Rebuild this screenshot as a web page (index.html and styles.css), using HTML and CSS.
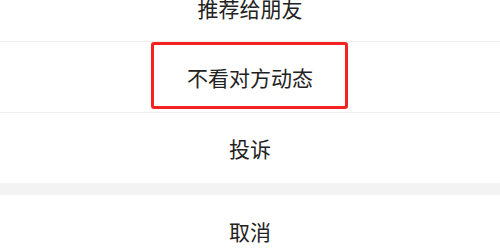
FILE: index.html
```html
<!DOCTYPE html>
<html lang="zh-CN">
<head>
<meta charset="utf-8">
<link rel="stylesheet" href="styles.css">
</head>
<body>
<div class="sheet">
  <div class="group">
    <div class="item first">推荐给朋友</div>
    <div class="item highlighted">不看对方动态<span class="mark"></span></div>
    <div class="item last">投诉</div>
  </div>
  <div class="gap"></div>
  <div class="group">
    <div class="item cancel">取消</div>
  </div>
</div>
</body>
</html>
```
FILE: styles.css
```css
html, body {
  margin: 0;
  padding: 0;
  background: #ffffff;
}
body {
  width: 500px;
  height: 251px;
  overflow: hidden;
  font-family: "Noto Sans CJK SC", "Noto Sans", sans-serif;
}
.sheet {
  display: flex;
  flex-direction: column;
  margin-top: -30px;
}
.group {
  display: flex;
  flex-direction: column;
  background: #ffffff;
}
.item {
  position: relative;
  height: 71px;
  box-sizing: border-box;
  border-bottom: 1px solid #efefef;
  display: flex;
  align-items: center;
  justify-content: center;
  font-size: 21px;
  color: #222222;
}
.item.first {
  height: 72px;
  padding-top: 4px;
}
.item.last {
  height: 70px;
  border-bottom: none;
}
.item.cancel {
  border-bottom: none;
}
.gap {
  height: 12px;
  background: #f3f3f3;
}
.mark {
  position: absolute;
  left: 151px;
  top: 0;
  width: 197px;
  height: 67px;
  box-sizing: border-box;
  border: 3px solid #f52222;
  border-radius: 3px;
}
```
